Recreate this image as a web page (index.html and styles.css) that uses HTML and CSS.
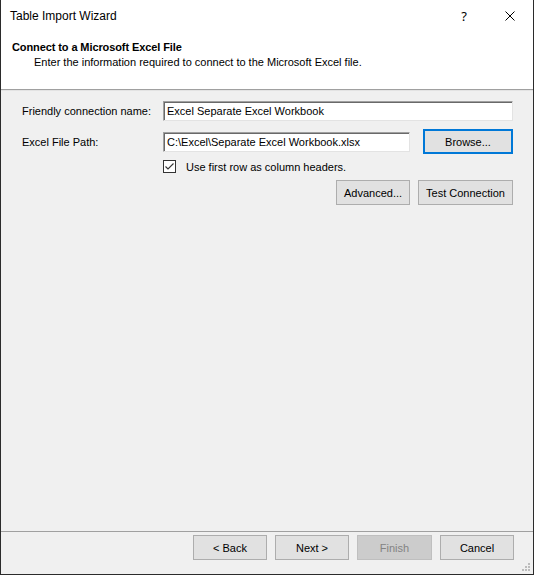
FILE: index.html
```html
<!DOCTYPE html>
<html>
<head>
<meta charset="utf-8">
<link rel="stylesheet" href="styles.css">
</head>
<body>
<div class="window">
  <div class="titlebar">
    <div class="title">Table Import Wizard</div>
    <div class="tbtn help">?</div>
    <div class="tbtn close">
      <svg width="10" height="10" viewBox="0 0 10 10"><path d="M0.5 0.5 L9.5 9.5 M9.5 0.5 L0.5 9.5" stroke="#000" stroke-width="1" fill="none"/></svg>
    </div>
  </div>
  <div class="header">
    <div class="heading">Connect to a Microsoft Excel File</div>
    <div class="subheading">Enter the information required to connect to the Microsoft Excel file.</div>
  </div>
  <div class="etch"></div>
  <div class="content">
    <div class="row row1">
      <label class="lbl">Friendly connection name:</label>
      <div class="input wide">Excel Separate Excel Workbook</div>
    </div>
    <div class="row row2">
      <label class="lbl">Excel File Path:</label>
      <div class="input path">C:\Excel\Separate Excel Workbook.xlsx</div>
      <button class="btn browse">Browse...</button>
    </div>
    <div class="row row3">
      <span class="check">
        <svg width="13" height="13" viewBox="0 0 13 13"><rect x="0.5" y="0.5" width="12" height="12" fill="#fff" stroke="#333"/><path d="M2.5 6.5 L5 9 L10.5 3.5" stroke="#333" stroke-width="1.1" fill="none"/></svg>
      </span>
      <span class="checklbl">Use first row as column headers.</span>
    </div>
    <div class="row row4">
      <button class="btn advanced">Advanced...</button>
      <button class="btn test">Test Connection</button>
    </div>
  </div>
  <div class="footsep"></div>
  <div class="footer">
    <button class="btn nav">&lt; Back</button>
    <button class="btn nav">Next &gt;</button>
    <button class="btn nav finish disabled">Finish</button>
    <button class="btn nav">Cancel</button>
  </div>
  <svg class="grip" width="9" height="9" viewBox="0 0 9 9">
    <rect x="6" y="0" width="2" height="2" fill="#bcbcbc"/>
    <rect x="3" y="3" width="2" height="2" fill="#bcbcbc"/>
    <rect x="6" y="3" width="2" height="2" fill="#bcbcbc"/>
    <rect x="0" y="6" width="2" height="2" fill="#bcbcbc"/>
    <rect x="3" y="6" width="2" height="2" fill="#bcbcbc"/>
    <rect x="6" y="6" width="2" height="2" fill="#bcbcbc"/>
  </svg>
</div>
</body>
</html>
```
FILE: styles.css
```css
* { box-sizing: border-box; }
html, body { margin: 0; padding: 0; }
body {
  font-family: "Liberation Sans", Arial, sans-serif;
  font-size: 11px;
  color: #000;
  background: #f0f0f0;
}
.window {
  position: relative;
  width: 534px;
  height: 575px;
  display: flex;
  flex-direction: column;
  background: #f0f0f0;
  border-left: 1px solid #2b2b2b;
  border-right: 1px solid #2b2b2b;
  border-bottom: 1px solid #2b2b2b;
}
.titlebar {
  height: 31px;
  background: #fff;
  display: flex;
  align-items: center;
}
.title {
  flex: 1;
  padding-left: 9px;
  font-family: "Liberation Sans", Arial, sans-serif;
  font-size: 12px;
  padding-top: 1px;
}
.tbtn {
  width: 46px;
  height: 31px;
  display: flex;
  align-items: center;
  justify-content: center;
}
.help {
  font-family: "Noto Sans", sans-serif;
  font-size: 13px;
}
.header {
  height: 58px;
  background: #fff;
  padding-top: 9px;
}
.heading {
  font-weight: bold;
  padding-left: 11px;
  line-height: 14px;
  letter-spacing: -0.1px;
}
.subheading {
  margin-left: 33px;
  line-height: 16px;
}
.etch {
  height: 2px;
  border-top: 1px solid #a0a0a0;
  border-bottom: 1px solid #e3e3e3;
}
.content {
  flex: 1;
  padding: 10px 20px 0 21px;
}
.row {
  display: flex;
  align-items: center;
}
.lbl {
  width: 141px;
}
.row1 { height: 20px; }
.row2 { height: 25px; margin-top: 8px; }
.row3 { height: 13px; margin-top: 6px; padding-left: 141px; }
.row4 { height: 25px; margin-top: 7px; justify-content: flex-end; gap: 8px; }
.input {
  height: 20px;
  background: #fff;
  border: 1px solid;
  border-color: #a0a0a0 #e3e3e3 #e3e3e3 #a0a0a0;
  box-shadow: inset 1px 1px 0 #696969;
  padding: 2px 3px 0 3px;
  line-height: 15px;
  white-space: nowrap;
}
.wide { width: 350px; }
.path { width: 247px; }
.btn {
  font-family: "Liberation Sans", Arial, sans-serif;
  font-size: 11px;
  color: #000;
  background: #e1e1e1;
  border: 1px solid #adadad;
  height: 25px;
  padding: 0;
  margin: 0;
}
.browse {
  width: 90px;
  margin-left: 13px;
  border: 2px solid #0078d7;
}
.check { display: flex; width: 13px; height: 13px; }
.checklbl { margin-left: 10px; }
.advanced { width: 74px; }
.test { width: 95px; }
.footsep {
  height: 1px;
  background: #a0a0a0;
}
.footer {
  height: 42px;
  display: flex;
  justify-content: flex-end;
  gap: 8px;
  padding: 3px 19px 0 0;
}
.nav { width: 74px; }
.finish { width: 75px; }
.disabled {
  background: #cccccc;
  border-color: #bfbfbf;
  color: #838383;
}
.grip {
  position: absolute;
  right: 2px;
  bottom: 2px;
}
```
